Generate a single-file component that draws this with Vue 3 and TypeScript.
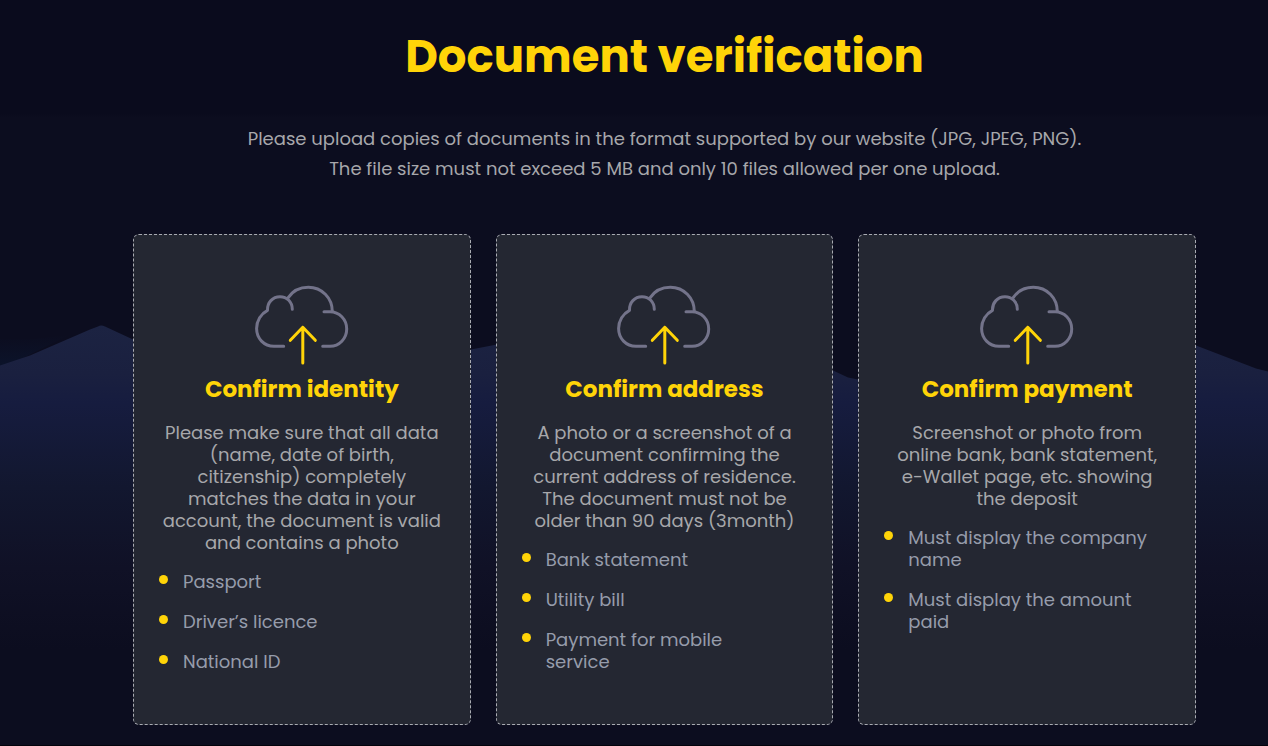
<script setup lang="ts">
interface VerificationCard {
  id: string
  title: string
  text: string
  items: string[]
}

const intro: string[] = [
  'Please upload copies of documents in the format supported by our website (JPG, JPEG, PNG).',
  'The file size must not exceed 5 MB and only 10 files allowed per one upload.',
]

const cards: VerificationCard[] = [
  {
    id: 'identity',
    title: 'Confirm identity',
    text: 'Please make sure that all data\n(name, date of birth,\ncitizenship) completely\nmatches the data in your\naccount, the document is valid\nand contains a photo',
    items: ['Passport', 'Driver’s licence', 'National ID'],
  },
  {
    id: 'address',
    title: 'Confirm address',
    text: 'A photo or a screenshot of a\ndocument confirming the\ncurrent address of residence.\nThe document must not be\nolder than 90 days (3month)',
    items: ['Bank statement', 'Utility bill', 'Payment for mobile\nservice'],
  },
  {
    id: 'payment',
    title: 'Confirm payment',
    text: 'Screenshot or photo from\nonline bank, bank statement,\ne-Wallet page, etc. showing\nthe deposit',
    items: ['Must display the company\nname', 'Must display the amount\npaid'],
  },
]
</script>

<template>
  <main class="page">
    <svg class="scenery" viewBox="0 0 1268 746" preserveAspectRatio="none" aria-hidden="true">
      <defs>
        <linearGradient id="hill" gradientUnits="userSpaceOnUse" x1="0" y1="326" x2="0" y2="650">
          <stop offset="0" stop-color="#1c2342" />
          <stop offset="0.15" stop-color="#1a203f" />
          <stop offset="0.24" stop-color="#161c3f" />
          <stop offset="0.5" stop-color="#12172f" />
          <stop offset="0.75" stop-color="#101126" />
          <stop offset="1" stop-color="#0c0d1f" />
        </linearGradient>
        <linearGradient id="haze" gradientUnits="userSpaceOnUse" x1="0" y1="335" x2="0" y2="366">
          <stop offset="0" stop-color="#0c0d1f" />
          <stop offset="1" stop-color="#0b132a" />
        </linearGradient>
      </defs>
      <path d="M0 340L30 340L70 335L0 370Z" fill="url(#haze)" />
      <path
        d="M0 366L30 356L90 330L98 327Q101 325 105 327L133 340L240 382L380 370L471 350L497 345L640 318L833 371L848 378L858 380L1000 400L1110 320L1196 346L1256 369L1268 372V650H0Z"
        fill="url(#hill)"
      />
    </svg>

    <div class="content">
      <header class="heading">
        <h1>Document verification</h1>
        <p v-for="line in intro" :key="line">{{ line }}</p>
      </header>

      <div class="cards">
        <section v-for="card in cards" :key="card.id" class="card" :aria-labelledby="card.id">
          <svg class="upload" viewBox="0 0 96 80" aria-hidden="true">
            <g fill="none" stroke-width="3" stroke-linecap="round" stroke-linejoin="round">
              <g stroke="#73738a">
                <path d="M29.7 61.3H20C10 61.3 2.6 53.5 2.6 43.6C2.6 35.8 7 28.7 13.5 25.3C13.2 17.6 18.6 11.7 26 11.7C33 11.7 38.3 17 38.3 24.3" />
                <path d="M34 12.9C38.5 6.2 46 2.3 54.3 2.3C67.8 2.3 78.3 12.9 78.3 26.6" />
                <path d="M70 26.7H76C85.3 26.7 92.7 34.5 92.7 44C92.7 53.5 85.3 61.3 76 61.3H68.7" />
              </g>
              <path d="M48.8 78V42.3M36.3 55.3L48.8 42.3L61.3 55.3" stroke="#ffd408" />
            </g>
          </svg>
          <h2 :id="card.id">{{ card.title }}</h2>
          <p>{{ card.text }}</p>
          <ul>
            <li v-for="item in card.items" :key="item">{{ item }}</li>
          </ul>
        </section>
      </div>
    </div>
  </main>
</template>

<style>
body {
  margin: 0;
  background: #0c0d1f;
}
</style>

<style scoped>
.page {
  position: relative;
  box-sizing: border-box;
  min-height: 100vh;
  padding: 27px 72px 20px 133px;
  border-bottom: 1px solid #03030c;
  background: linear-gradient(#0a0b1d 114px, #0c0d1f 118px);
  color: #a7a7ab;
  font-family: Poppins, Inter, "Open Sans", sans-serif;
  font-size: 18px;
}

.scenery {
  position: absolute;
  inset: 0;
  width: 100%;
  height: 100%;
}

.content {
  position: relative;
}

.heading {
  text-align: center;
}

h1,
h2,
p,
ul {
  margin: 0;
}

h1 {
  margin-bottom: 37px;
  color: #ffd408;
  font-size: 45px;
  line-height: 60px;
  font-weight: 700;
}

.heading p {
  line-height: 30px;
}

.cards {
  display: grid;
  grid-template-columns: repeat(3, 1fr);
  gap: 25px;
  margin-top: 50px;
}

.card {
  display: flex;
  flex-direction: column;
  align-items: center;
  box-sizing: border-box;
  min-height: 491px;
  padding: 50px 25px;
  border: 1px dashed #a9abb2;
  border-radius: 6px;
  background: #242732;
}

.upload {
  width: 96px;
  height: 80px;
}

h2 {
  margin-top: 8px;
  color: #ffd408;
  font-size: 23px;
  line-height: 32px;
  font-weight: 700;
}

.card p {
  margin-top: 17px;
  line-height: 22px;
  text-align: center;
  white-space: pre-line;
}

ul {
  align-self: stretch;
  display: grid;
  gap: 18px;
  margin-top: 17px;
  padding: 0;
  list-style: none;
  color: #969cab;
  line-height: 22px;
}

li {
  display: flex;
  align-items: flex-start;
  gap: 15px;
  white-space: pre-line;
}

li::before {
  flex: none;
  width: 9px;
  height: 9px;
  margin-top: 4px;
  border-radius: 50%;
  background: #ffd408;
  content: "";
}
</style>
